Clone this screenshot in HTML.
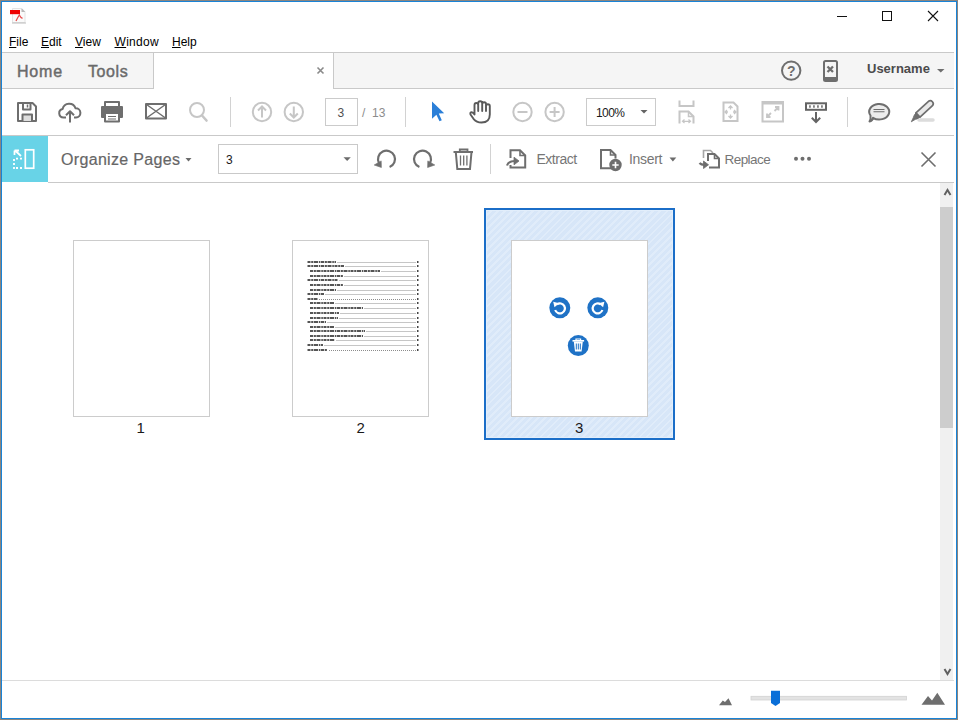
<!DOCTYPE html>
<html><head><meta charset="utf-8">
<style>
*{margin:0;padding:0;box-sizing:border-box}
html,body{width:958px;height:720px;overflow:hidden;background:#fff}
body{position:relative;font-family:"Liberation Sans",sans-serif;color:#333}
.a{position:absolute}
svg{position:absolute;overflow:visible}
.t{position:absolute;white-space:nowrap;line-height:1}
</style></head><body>
<!-- window frame -->
<div class="a" style="left:0;top:0;width:958px;height:720px;border:1px solid #8a8580"></div>
<div class="a" style="left:1px;top:1px;width:956px;height:718px;border:1px solid #1883d7"></div>

<!-- title bar -->
<svg style="left:0;top:0" width="958" height="30">
  <!-- pdf icon -->
  <path d="M12.5 8.5 H21 L25 12.5 V22.5 H12.5 Z" fill="#fafafa" stroke="#e4e4e4" stroke-width="1"/>
  <path d="M21.5 8 L25.5 12 H21.5 Z" fill="#b8b8b8"/>
  <rect x="12" y="22.5" width="14" height="1" fill="#bcbcbc"/>
  <rect x="10" y="10" width="10" height="4.2" fill="#ee0000"/>
  <path d="M16 21 Q18 17 19.3 15 Q20.5 17.5 22.5 18.3" fill="none" stroke="#e84a4a" stroke-width="1.3"/>
  <!-- window controls -->
  <rect x="837" y="16" width="10" height="1" fill="#111"/>
  <rect x="882.5" y="11.5" width="9" height="9" fill="none" stroke="#111" stroke-width="1"/>
  <path d="M928 11 L938 21 M938 11 L928 21" stroke="#111" stroke-width="1.1"/>
</svg>

<!-- menu -->
<div class="t" style="left:9px;top:36px;font-size:12px;color:#000"><u>F</u>ile</div>
<div class="t" style="left:41px;top:36px;font-size:12px;color:#000"><u>E</u>dit</div>
<div class="t" style="left:75px;top:36px;font-size:12px;color:#000"><u>V</u>iew</div>
<div class="t" style="left:114.5px;top:36px;font-size:12px;color:#000;letter-spacing:0.3px"><u>W</u>indow</div>
<div class="t" style="left:172px;top:36px;font-size:12px;color:#000"><u>H</u>elp</div>

<!-- tab bar -->
<div class="a" style="left:2px;top:52px;width:952px;height:1px;background:#c9c9c9"></div>
<div class="a" style="left:2px;top:53px;width:152px;height:36px;background:#f5f5f5;border-right:1px solid #c9c9c9;border-bottom:1px solid #c9c9c9"></div>
<div class="a" style="left:333px;top:53px;width:621px;height:36px;background:#f5f5f5;border-left:1px solid #c9c9c9;border-bottom:1px solid #c9c9c9"></div>
<div class="t" style="left:17px;top:63.5px;font-size:16px;color:#6a6a6a;letter-spacing:0.8px;-webkit-text-stroke:0.45px #6a6a6a">Home</div>
<div class="t" style="left:88px;top:63.5px;font-size:16px;color:#6a6a6a;letter-spacing:0.6px;-webkit-text-stroke:0.45px #6a6a6a">Tools</div>
<svg style="left:0;top:52px" width="958" height="38">
  <path d="M317.5 15.5 L323.5 21.5 M323.5 15.5 L317.5 21.5" stroke="#8a8a8a" stroke-width="1.6"/>
  <circle cx="791.2" cy="18.6" r="9.2" fill="none" stroke="#6e6e6e" stroke-width="2"/>
  <text x="791.3" y="24.2" font-family="Liberation Sans" font-weight="bold" font-size="14" fill="#6e6e6e" text-anchor="middle">?</text>
  <rect x="824" y="9" width="13" height="20" rx="1.5" fill="none" stroke="#6e6e6e" stroke-width="2"/>
  <rect x="824" y="25" width="13" height="4" fill="#6e6e6e"/>
  <path d="M827.5 14.5 L833 20 M833 14.5 L827.5 20" stroke="#6e6e6e" stroke-width="2.3"/>
  <path d="M937 17 H944.5 L940.75 20.5 Z" fill="#6e6e6e"/>
</svg>
<div class="t" style="left:867px;top:62px;font-size:13px;font-weight:bold;color:#4b4b4b">Username</div>

<!-- toolbar -->
<div class="a" style="left:2px;top:136px;width:46px;height:46px;background:#68d3e7"></div>

<div class="a" style="left:2px;top:135px;width:952px;height:1px;background:#c9c9c9"></div>
<svg style="left:0;top:0" width="958" height="720">
<g fill="none" stroke="#6e6e6e" stroke-width="2" stroke-linejoin="round">
  <!-- save -->
  <path d="M18 103 H32.5 L36 106.5 V121 H18 Z"/>
  <path d="M23 103 V109.5 H30.5 V103"/>
  <path d="M27.5 104.5 V107.5" stroke-width="1.5"/>
  <path d="M22.5 121 V114.5 H32 V121" fill="#dedede"/>
  <!-- upload cloud -->
  <path d="M66 117.5 H63.5 A4.3 4.3 0 0 1 62.6 109 A6.8 6.8 0 0 1 75.6 108.3 A4.6 4.6 0 0 1 76 117.5 H74"/>
  <path d="M70 122.5 V111.5 M66 115.3 L70 111.3 L74 115.3"/>
  <!-- print -->
  <path d="M105 106 V102 H119 V106"/>
  <path d="M104.5 117 H102 V107 H122 V117 H119.5" fill="#6e6e6e"/>
  <rect x="105" y="113" width="14" height="8.5" fill="#fff"/>
  <path d="M108 116.5 H116 M108 119 H116" stroke-width="1.2"/>
  <!-- mail -->
  <rect x="146" y="104" width="20" height="14.5"/>
  <path d="M146.5 104.5 L165.5 118 M165.5 104.5 L146.5 118" stroke-width="1.5"/>
</g>
<g fill="none" stroke="#c6c6c6" stroke-width="2">
  <circle cx="197" cy="110" r="7"/>
  <path d="M202 115.5 L206.5 120.5" stroke-width="2.6" stroke-linecap="round"/>
  <circle cx="262" cy="112" r="9.2"/>
  <path d="M262 117.5 V106.5 M258 110.5 L262 106.5 L266 110.5"/>
  <circle cx="293.8" cy="112" r="9.2"/>
  <path d="M293.8 106.5 V117.5 M289.8 113.5 L293.8 117.5 L297.8 113.5"/>
  <circle cx="522.5" cy="112" r="9.2"/>
  <path d="M517.5 112 H527.5"/>
  <circle cx="554.6" cy="112" r="9.2"/>
  <path d="M549.6 112 H559.6 M554.6 107 V117"/>
  <!-- fit width -->
  <path d="M679.5 100.5 V106 H693.5 V100.5"/>
  <path d="M679.5 123.5 V111.5 H688.5 L693.5 116.5 V123.5"/>
  <path d="M688.5 111.5 V116.5 H693.5" stroke-width="1.5"/>
  <path d="M682.5 121.3 H690.5 M684.5 119.5 L682.5 121.3 L684.5 123 M688.5 119.5 L690.5 121.3 L688.5 123" stroke-width="1.2"/>
  <!-- page fit -->
  <path d="M723.5 102.5 H733.5 L737.5 106.5 V121 H723.5 Z"/>
  <path d="M730.5 106 V109.5 M730.5 114.5 V118 M725 112 H728 M733 112 H736 M728.5 108 L730.5 106 L732.5 108 M728.5 116 L730.5 118 L732.5 116 M727 110 L725 112 L727 114 M734 110 L736 112 L734 114" stroke-width="1.3"/>
  <!-- fullscreen -->
  <rect x="762.5" y="102" width="20.5" height="19.5"/>
  <path d="M762.5 103 H783" stroke-width="3"/>
  <path d="M767 117 L771 113 M767 113.5 V117 H770.5 M778.5 107 L774.5 111 M775 107 H778.5 V110.5" stroke-width="1.8"/>
  <!-- ruler lines separators -->
</g>
<g fill="none" stroke="#646464" stroke-width="2">
  <!-- read mode -->
  <rect x="806" y="103.3" width="20" height="6.5"/>
  <path d="M809.2 106.5 h1.5 M813.2 106.5 h1.5 M817.2 106.5 h1.5 M821.2 106.5 h1.5" stroke-width="2.5"/>
  <path d="M816 112 V122 M811.8 117.8 L816 122 L820.2 117.8"/>
</g>
<g fill="none" stroke="#6e6e6e" stroke-width="2" stroke-linejoin="round">
  <!-- comment -->
  <path d="M873 117.8 A10 7.8 0 1 0 870.5 115.5 Q871 119 869.5 121.5 Q872.5 121 873 117.8 Z" fill="#ececec"/>
  <path d="M873.5 109.5 H884.5 M873.5 111.8 H884.5" stroke-width="1.1"/>
  <!-- highlighter -->
  <path d="M919 120 H933" stroke="#dcdcdc" stroke-width="3.5" stroke-linecap="round"/>
  <path d="M920 117.2 L915.9 112.8 L928.5 101.3 A3 3 0 0 1 932.5 105.7 Z" fill="#e8e8e8" stroke-width="1.7"/>
  <path d="M915.96 112.81 L920.04 117.19 L916.4 119.2 L913.7 116.3 Z" fill="#6e6e6e" stroke-width="1"/>
  <path d="M913.7 116.8 L916 119 L911.3 121.8 Z" fill="#6e6e6e" stroke-width="0.8"/>
</g>
<!-- pointer -->
<path d="M432 101.5 L444.2 113.2 L438.8 113.6 L441.8 120.2 L439.5 121.3 L436.4 114.8 L432 118.8 Z" fill="#2b7fd8"/>
<!-- hand -->
<path d="M470.5 114.5 Q469.8 112.3 471.8 112.3 Q473 112.3 474.5 114.5 V105 Q474.5 103 476.3 103 Q478.2 103 478.2 105 V111 V103.3 Q478.2 101.2 480.2 101.2 Q482.2 101.2 482.2 103.3 V111 V104 Q482.2 102.2 484.1 102.2 Q486 102.2 486 104 V111 V106 Q486 104.3 487.9 104.3 Q489.8 104.3 489.8 106 V114.5 Q489.8 122.5 481.5 122.5 Q476.5 122.5 473.5 118.8 Z" fill="none" stroke="#5a5a5a" stroke-width="1.9" stroke-linejoin="round"/>
<!-- separators -->
<path d="M230.5 97 V127 M405.5 97 V127 M847.5 97 V127 M490.5 144 V174" stroke="#d2d2d2" stroke-width="1"/>
<!-- zoom triangle -->
<path d="M640.5 110 H647.5 L644 113.6 Z" fill="#646464"/>

<!-- organize bar -->
<g fill="none" stroke="#fff" stroke-width="2">
  <rect x="25.3" y="149.8" width="8.4" height="18.4" stroke-width="1.7"/>
  <path d="M14 159 V161 M14 163 V165 M14 167 V169 M16 158.7 H18 M20 158.7 H22 M16 168 H18 M20 168 H22" stroke-width="1.8"/>
  <path d="M15 150.5 L21 156 M14.5 150.5 V155 M14.5 150.5 H19" stroke-width="1.8"/>
</g>
<path d="M185.5 158 H191.5 L188.5 161.5 Z" fill="#6b6b6b"/>
<path d="M343.5 157.3 H350.8 L347.15 161 Z" fill="#6b6b6b"/>
<path d="M669.5 157.5 H676.3 L672.9 161.4 Z" fill="#6b6b6b"/>
<g fill="none" stroke="#6e6e6e" stroke-width="2">
  <path d="M389.6 167.1 A8.5 8.5 0 1 0 379 163.2" stroke-width="2.2"/>
  <path d="M374.2 165 L381.4 167.5 L381.2 160.9 Z" fill="#6e6e6e" stroke-width="0.6"/>
  <path d="M419.4 167.1 A8.5 8.5 0 1 1 430 163.2" stroke-width="2.2"/>
  <path d="M434.8 165 L427.6 167.5 L427.8 160.9 Z" fill="#6e6e6e" stroke-width="0.6"/>
  <!-- trash -->
  <path d="M453.5 152 H473"/>
  <path d="M459.8 151.5 V149.5 H467.5 V151.5" stroke-width="1.8"/>
  <path d="M455.8 152 L457.3 169 H470 L471.5 152"/>
  <path d="M460.5 155.5 V165.5 M463.7 155.5 V165.5 M466.9 155.5 V165.5" stroke-width="1.3"/>
  <!-- extract -->
  <path d="M510.5 158 V150.3 H520 L525.2 155.5 V167.5 H510.5 V165"/>
  <path d="M520 150.3 V155.5 H525.2" stroke-width="1.6"/>
  <path d="M507 165.5 Q508.5 161 515 161" stroke-width="2.2"/>
  <path d="M514 157.2 L519 161 L514 164.8 Z" fill="#6e6e6e" stroke-width="0.8"/>
  <!-- insert -->
  <path d="M611 168.2 H601 V150 H610.5 L615.5 155 V158.5"/>
  <path d="M610.5 150 V155 H615.5" stroke-width="1.6"/>
  <circle cx="615.5" cy="165" r="5.2" fill="#6e6e6e"/>
  <path d="M615.5 161.8 V168.2 M612.3 165 H618.7" stroke="#fff" stroke-width="1.6"/>
  <!-- replace -->
  <path d="M703.5 158 V150.5 H710.5 L713 153" stroke="#a6a6a6" stroke-width="1.6"/>
  <path d="M708 161 V154 H714.5 L719 158.5 V167.5 H709"/>
  <path d="M714.5 154 V158.5 H719" stroke-width="1.6"/>
  <path d="M699.5 163 Q701 164.8 704.5 164.8" stroke-width="2.2"/>
  <path d="M703.5 161 L708.5 164.8 L703.5 168.5 Z" fill="#6e6e6e" stroke-width="0.8"/>
  <!-- close -->
  <path d="M921.5 152.5 L935.5 166.5 M935.5 152.5 L921.5 166.5" stroke-width="1.6"/>
</g>
<circle cx="796" cy="158.8" r="2" fill="#6e6e6e"/>
<circle cx="802.5" cy="158.8" r="2" fill="#6e6e6e"/>
<circle cx="809" cy="158.8" r="2" fill="#6e6e6e"/>
</svg>
<div class="a" style="left:325px;top:98px;width:33px;height:28px;border:1px solid #cbcbcb"></div>
<div class="t" style="left:337.5px;top:107px;font-size:12px;color:#505050">3</div>
<div class="t" style="left:362px;top:107px;font-size:12px;color:#8c8c8c">/&nbsp;&nbsp;13</div>
<div class="a" style="left:586px;top:98px;width:70px;height:28px;border:1px solid #cbcbcb"></div>
<div class="t" style="left:596px;top:107px;font-size:12px;color:#1a1a1a;letter-spacing:-0.6px">100%</div>


<!-- organize bar -->
<div class="a" style="left:48px;top:182px;width:906px;height:1px;background:#c9c9c9"></div>
<div class="t" style="left:61px;top:152.3px;font-size:16px;color:#666;letter-spacing:0.33px;-webkit-text-stroke:0.2px #666">Organize Pages</div>
<div class="a" style="left:218px;top:144px;width:140px;height:30px;border:1px solid #c9c9c9"></div>
<div class="t" style="left:226px;top:154px;font-size:12px;color:#1a1a1a">3</div>
<div class="t" style="left:536.5px;top:152px;font-size:14px;color:#767676;letter-spacing:-0.5px">Extract</div>
<div class="t" style="left:629px;top:152px;font-size:14px;color:#767676;letter-spacing:-0.3px">Insert</div>
<div class="t" style="left:724.5px;top:152.5px;font-size:13.5px;color:#767676;letter-spacing:-0.55px">Replace</div>

<!-- content -->
<!-- scrollbar -->
<div class="a" style="left:940px;top:183px;width:13px;height:497px;background:#f0f0f0"></div>
<div class="a" style="left:940px;top:207px;width:13px;height:221px;background:#cdcdcd"></div>
<svg style="left:0;top:0" width="958" height="720">
  <path d="M944.5 195 L947.5 190 L950.5 195" fill="none" stroke="#606060" stroke-width="2"/>
  <path d="M944.5 669 L947.5 674 L950.5 669" fill="none" stroke="#606060" stroke-width="2"/>
</svg>

<!-- pages -->
<div class="a" style="left:73px;top:240px;width:137px;height:177px;border:1px solid #cccccc;background:#fff"></div>
<div class="a" style="left:292px;top:240px;width:137px;height:177px;border:1px solid #cccccc;background:#fff"></div>
<div class="a" style="left:484px;top:208px;width:191px;height:232px;border:2px solid #1b6ec8;box-shadow:inset 0 0 0 1px #e2eefb;background:repeating-linear-gradient(135deg,#d7e6f8 0 3px,#e0ecfa 3px 5px)"></div>
<div class="a" style="left:511px;top:240px;width:137px;height:177px;border:1px solid #cccccc;background:#fff"></div>
<svg style="left:0;top:0" width="958" height="720">
<g stroke-width="1.6" stroke="#1e1e1e" stroke-dasharray="3 0.7 2.2 0.6 4 0.8 1.6 0.6">
<path d="M307.5 262 H336"/>
<path d="M307.5 266 H344"/>
<path d="M310 271 H380"/>
<path d="M310 276 H343"/>
<path d="M307.5 280 H338"/>
<path d="M310 285 H343"/>
<path d="M310 290 H336"/>
<path d="M307.5 294 H324"/>
<path d="M307.5 299 H317.5"/>
<path d="M310 303 H334"/>
<path d="M310 308 H363"/>
<path d="M310 313 H339"/>
<path d="M310 318 H338"/>
<path d="M307.5 322 H326"/>
<path d="M310 327 H334"/>
<path d="M310 331 H365"/>
<path d="M310 336 H363"/>
<path d="M310 340 H335"/>
<path d="M307.5 345 H323"/>
<path d="M307.5 350 H327.5"/>
</g><g stroke-width="1" stroke="#8c8c8c" stroke-dasharray="1 1">
<path d="M337.5 262.5 H416"/>
<path d="M345.5 266.5 H416"/>
<path d="M381.5 271.5 H416"/>
<path d="M344.5 276.5 H416"/>
<path d="M339.5 280.5 H416"/>
<path d="M344.5 285.5 H416"/>
<path d="M337.5 290.5 H416"/>
<path d="M325.5 294.5 H416"/>
<path d="M319.0 299.5 H416"/>
<path d="M335.5 303.5 H416"/>
<path d="M364.5 308.5 H416"/>
<path d="M340.5 313.5 H416"/>
<path d="M339.5 318.5 H416"/>
<path d="M327.5 322.5 H416"/>
<path d="M335.5 327.5 H416"/>
<path d="M366.5 331.5 H416"/>
<path d="M364.5 336.5 H416"/>
<path d="M336.5 340.5 H416"/>
<path d="M324.5 345.5 H416"/>
<path d="M329.0 350.5 H416"/>
</g><g fill="#444">
<rect x="417" y="261" width="1.5" height="2"/>
<rect x="417" y="265" width="1.5" height="2"/>
<rect x="417" y="270" width="1.5" height="2"/>
<rect x="417" y="275" width="1.5" height="2"/>
<rect x="417" y="279" width="1.5" height="2"/>
<rect x="417" y="284" width="1.5" height="2"/>
<rect x="417" y="289" width="1.5" height="2"/>
<rect x="417" y="293" width="1.5" height="2"/>
<rect x="417" y="298" width="1.5" height="2"/>
<rect x="417" y="302" width="1.5" height="2"/>
<rect x="417" y="307" width="1.5" height="2"/>
<rect x="417" y="312" width="1.5" height="2"/>
<rect x="417" y="317" width="1.5" height="2"/>
<rect x="417" y="321" width="1.5" height="2"/>
<rect x="417" y="326" width="1.5" height="2"/>
<rect x="417" y="330" width="1.5" height="2"/>
<rect x="417" y="335" width="1.5" height="2"/>
<rect x="417" y="339" width="1.5" height="2"/>
<rect x="417" y="344" width="1.5" height="2"/>
<rect x="417" y="349" width="1.5" height="2"/>
</g></svg>
<svg style="left:0;top:0" width="958" height="720">
<g>
<circle cx="559.8" cy="307.8" r="10.5" fill="#1f72c6"/>
<path d="M557 304.3 A5 5 0 1 1 555.2 310" fill="none" stroke="#fff" stroke-width="2.2"/>
<path d="M553.2 301.8 L559.2 303.3 L554.5 307.3 Z" fill="#fff"/>
<circle cx="597.8" cy="307.8" r="10.5" fill="#1f72c6"/>
<path d="M600.6 304.3 A5 5 0 1 0 602.4 310" fill="none" stroke="#fff" stroke-width="2.2"/>
<path d="M604.4 301.8 L598.4 303.3 L603.1 307.3 Z" fill="#fff"/>
<circle cx="578.3" cy="345.6" r="10.5" fill="#1f72c6"/>
<path d="M572.5 340.8 H584.1" stroke="#fff" stroke-width="1.6"/>
<path d="M576 340.5 V339 H580.6 V340.5" stroke="#fff" stroke-width="1.2" fill="none"/>
<path d="M573.8 341.5 L575 351.5 H581.6 L582.8 341.5 Z" fill="#fff"/>
<path d="M576.3 343.5 V349.5 M578.3 343.5 V349.5 M580.3 343.5 V349.5" stroke="#1f72c6" stroke-width="1"/>
</g>
</svg>
<div class="t" style="left:136.5px;top:420px;font-size:15px;color:#1a1a1a">1</div>
<div class="t" style="left:356.5px;top:420px;font-size:15px;color:#1a1a1a">2</div>
<div class="t" style="left:575px;top:420px;font-size:15px;color:#1a1a1a">3</div>

<!-- status bar -->
<div class="a" style="left:2px;top:680px;width:952px;height:1px;background:#dcdcdc"></div>
<svg style="left:0;top:0" width="958" height="720">
<path d="M719 705.2 L722.8 700.5 L725 702 L728.5 698.3 L732 705.2 Z" fill="#6e6e6e"/>
<rect x="751" y="696.3" width="155.5" height="3.7" fill="#e3e3e3" stroke="#d2d2d2" stroke-width="0.8"/>
<path d="M771 690.8 H780 V703 L775.5 706 L771 703 Z" fill="#0a6fd8"/>
<path d="M921.5 704.8 L928 696 L932 700.5 L937.3 692.8 L945 704.8 Z" fill="#6e6e6e"/>
</svg>
</body></html>
